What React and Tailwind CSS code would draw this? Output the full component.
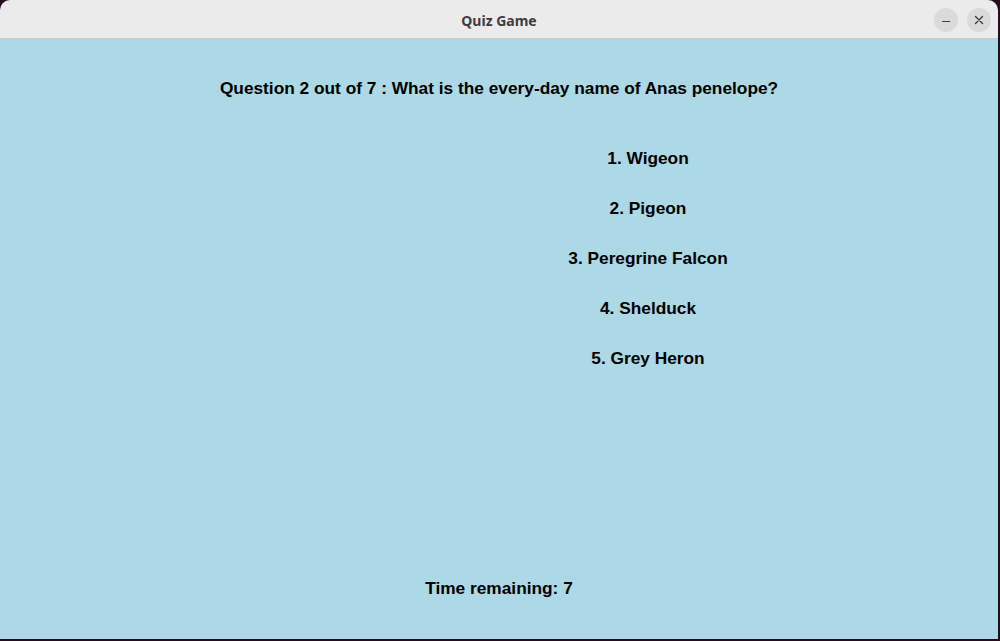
export default function App() {
  const options = ["1. Wigeon", "2. Pigeon", "3. Peregrine Falcon", "4. Shelduck", "5. Grey Heron"];
  const font = { fontFamily: '"Liberation Sans", Arial, sans-serif' };
  return (
    <div className="w-[1000px] h-[641px] bg-[#2c0a1e] overflow-hidden">
      <div className="w-[998px] h-[639px] flex flex-col rounded-t-[10px] overflow-hidden">
        <div className="h-[39px] shrink-0 bg-[#ebebeb] border-b border-[#c9c9c9] relative flex items-center justify-center">
          <span className="text-[14px] font-bold text-[#3d3d3d] mt-[2px]" style={{ fontFamily: '"Noto Sans", "Open Sans", sans-serif' }}>Quiz Game</span>
          <div className="absolute right-[7px] top-[8px] flex gap-[9px]">
            <div className="w-[24px] h-[24px] rounded-full bg-[#dadada] flex items-center justify-center">
              <div className="w-[8px] h-[1.5px] bg-[#3a3a3a] mt-[3px]" />
            </div>
            <div className="w-[24px] h-[24px] rounded-full bg-[#dadada] flex items-center justify-center">
              <svg width="10" height="10" viewBox="0 0 10 10">
                <path d="M1.5 1.5 L8.5 8.5 M8.5 1.5 L1.5 8.5" stroke="#3a3a3a" strokeWidth="1.4" strokeLinecap="round" />
              </svg>
            </div>
          </div>
        </div>
        <div className="flex-1 bg-[#add8e6] flex flex-col text-black font-bold text-[17.3px]" style={font}>
          <div className="mt-[39px] h-[20px] leading-[20px] text-center">
            Question 2 out of 7 : What is the every-day name of Anas penelope?
          </div>
          <div className="mt-[36px] flex">
            <div className="w-[298px] shrink-0" />
            <div className="flex-1 flex flex-col">
              {options.map((o) => (
                <div key={o} className="h-[50px] flex items-center justify-center">{o}</div>
              ))}
            </div>
          </div>
          <div className="mt-[194px] h-[20px] leading-[20px] text-center">Time remaining: 7</div>
        </div>
      </div>
    </div>
  );
}
